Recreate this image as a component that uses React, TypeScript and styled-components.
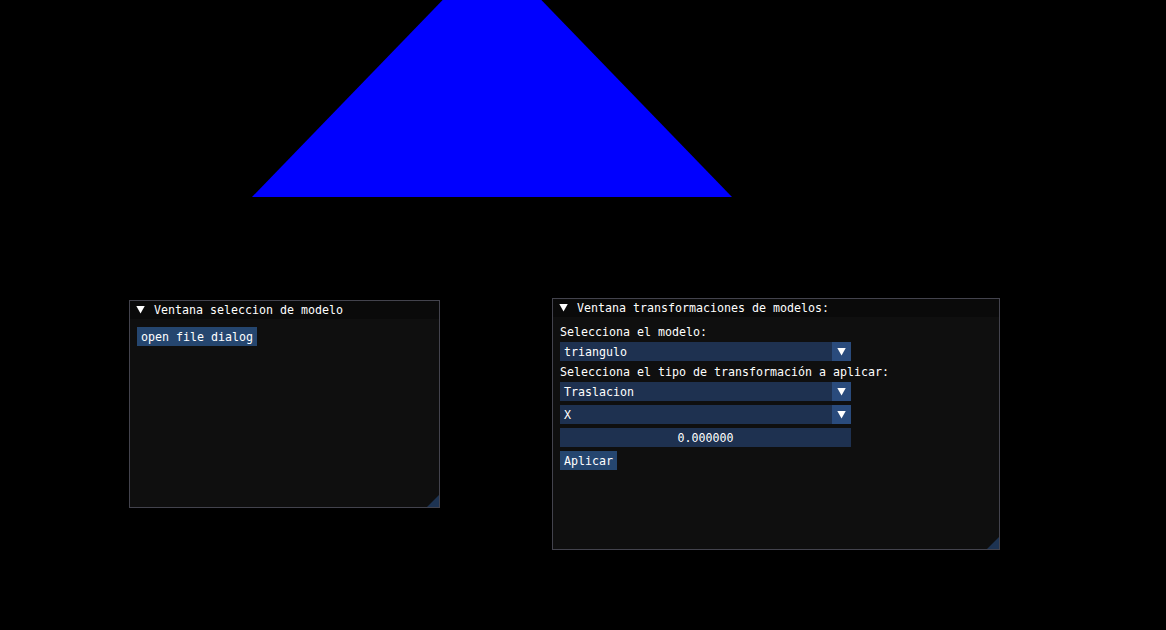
import * as React from 'react';
import styled, { createGlobalStyle } from 'styled-components';

const GlobalStyle = createGlobalStyle`
  html, body {
    margin: 0;
    padding: 0;
    background: #000000;
  }
  body {
    font-family: 'DejaVu Sans Mono', 'Liberation Mono', monospace;
    font-size: 11.63px;
    line-height: 13px;
    color: #ffffff;
  }
`;

type WindowProps = {
  left: number;
  top: number;
  width: number;
  height: number;
};

const Viewport = () => (
  <Stage>
    <Scene width="1166" height="630" viewBox="0 0 1166 630">
      <polygon points="252,197 732,197 492,-51" fill="#0000ff" />
    </Scene>

    <ImWindow left={129} top={300} width={311} height={208}>
      <TitleBar>
        <CollapseArrow />
        <TitleText>Ventana seleccion de modelo</TitleText>
      </TitleBar>
      <Body>
        <Button>open file dialog</Button>
      </Body>
      <ResizeGrip />
    </ImWindow>

    <ImWindow left={552} top={298} width={448} height={252}>
      <TitleBar>
        <CollapseArrow />
        <TitleText>Ventana transformaciones de modelos:</TitleText>
      </TitleBar>
      <Body>
        <Label>Selecciona el modelo:</Label>
        <Combo>
          <ComboValue>triangulo</ComboValue>
          <ComboArrow>
            <ArrowGlyph />
          </ComboArrow>
        </Combo>
        <Label>Selecciona el tipo de transformación a aplicar:</Label>
        <Combo>
          <ComboValue>Traslacion</ComboValue>
          <ComboArrow>
            <ArrowGlyph />
          </ComboArrow>
        </Combo>
        <Combo>
          <ComboValue>X</ComboValue>
          <ComboArrow>
            <ArrowGlyph />
          </ComboArrow>
        </Combo>
        <InputField>0.000000</InputField>
        <Button>Aplicar</Button>
      </Body>
      <ResizeGrip />
    </ImWindow>
  </Stage>
);

const Stage = styled.div`
  position: relative;
  width: 1166px;
  height: 630px;
  overflow: hidden;
  background: #000000;
`;

const Scene = styled.svg`
  position: absolute;
  top: 0;
  left: 0;
  display: block;
`;

const ImWindow = styled.div<WindowProps>`
  position: absolute;
  left: ${(p) => p.left}px;
  top: ${(p) => p.top}px;
  width: ${(p) => p.width}px;
  height: ${(p) => p.height}px;
  box-sizing: border-box;
  border: 1px solid #43434d;
  background: #0f0f0f;
  display: flex;
  flex-direction: column;
`;

const TitleBar = styled.div`
  height: 18px;
  flex: 0 0 18px;
  background: #0a0a0a;
  display: flex;
  align-items: center;
  padding-left: 6px;
`;

const CollapseArrow = styled.span`
  width: 9px;
  height: 8px;
  background: #ffffff;
  clip-path: polygon(0 0, 100% 0, 50% 100%);
  margin-right: 9px;
  margin-top: -1px;
`;

const TitleText = styled.span`
  white-space: nowrap;
  padding-top: 1px;
`;

const Body = styled.div`
  padding: 8px 7px;
  display: flex;
  flex-direction: column;
  align-items: flex-start;
  gap: 4px;
`;

const Label = styled.div`
  height: 13px;
  box-sizing: border-box;
  padding-top: 1px;
  white-space: nowrap;
`;

const Button = styled.div`
  height: 19px;
  box-sizing: border-box;
  padding: 4px 4px 2px;
  background: #25466f;
  white-space: nowrap;
`;

const Combo = styled.div`
  width: 291px;
  height: 19px;
  display: flex;
  background: #1e3150;
`;

const ComboValue = styled.div`
  flex: 1;
  padding: 4px 4px 2px;
  white-space: nowrap;
`;

const ComboArrow = styled.div`
  width: 19px;
  height: 19px;
  background: #2a4b7c;
  display: flex;
  align-items: center;
  justify-content: center;
`;

const ArrowGlyph = styled.span`
  width: 9px;
  height: 8px;
  background: #ffffff;
  clip-path: polygon(0 0, 100% 0, 50% 100%);
`;

const InputField = styled.div`
  width: 291px;
  height: 19px;
  box-sizing: border-box;
  padding: 4px 4px 2px;
  background: #1e3150;
  text-align: center;
`;

const ResizeGrip = styled.span`
  position: absolute;
  right: 0;
  bottom: 0;
  width: 12px;
  height: 12px;
  background: #1d3352;
  clip-path: polygon(100% 0, 100% 100%, 0 100%);
`;

const App = () => (
  <>
    <GlobalStyle />
    <Viewport />
  </>
);

export default App;
